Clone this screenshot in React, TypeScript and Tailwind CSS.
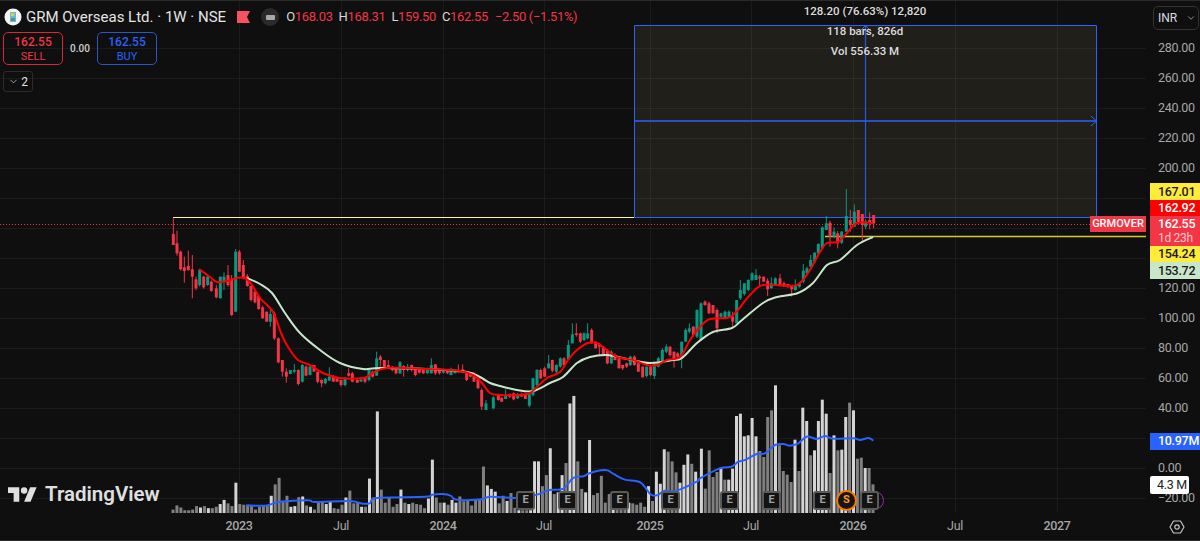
import { ChevronDown } from 'lucide-react';

// candle rows, read in crop units: [x, bodyTop, bodyBottom, up, wickTop, wickBottom]
type Row = [number, number, number, number, number?, number?];
type Candle = { x: number; top: number; bottom: number; up: boolean; hi: number; lo: number };

const early: Row[] = [
    [40, 72, 105, 0, 25, 105], [51, 100, 130, 0, 62, 137], [62, 125, 178, 0, 122, 182], [73, 172, 183, 0, 140, 218], [85, 168, 180, 0, 122, 182],
    [97, 178, 200, 0, 135, 265], [108, 208, 235, 0, 200, 240], [119, 180, 225, 1], [131, 200, 232, 0], [143, 200, 225, 1], [154, 215, 243, 0],
    [169, 235, 262, 0, 225, 265], [181, 200, 265, 1], [192, 200, 215, 1, 187, 240], [204, 195, 225, 0, 165, 230], [215, 210, 315, 0, 195, 318], [227, 125, 305, 1, 117, 305],
    [238, 125, 185, 0], [250, 165, 205, 0, 150, 208], [262, 198, 228, 0, 192, 230], [273, 228, 270, 0], [285, 245, 277, 0], [296, 258, 297, 0], [308, 292, 325, 0], [320, 305, 335, 0],
    [331, 312, 335, 1, 300, 350], [343, 310, 385, 0, 305, 390], [355, 385, 457, 0], [367, 450, 485, 0, 450, 500], [379, 485, 500, 0, 475, 518], [391, 480, 492, 1], [403, 480, 485, 1, 462, 490],
    [415, 480, 522, 0], [427, 465, 515, 1], [438, 470, 497, 0], [450, 470, 495, 1], [462, 465, 485, 0], [473, 485, 515, 0, 485, 520], [485, 510, 520, 0, 508, 532], [496, 507, 520, 1],
    [508, 500, 512, 1, 472, 512], [520, 500, 515, 0], [531, 505, 515, 0], [543, 510, 525, 0], [555, 503, 525, 1], [566, 490, 497, 0, 475, 500], [577, 490, 515, 0], [592, 510, 518, 0], [603, 508, 515, 1],
    [615, 505, 515, 0], [627, 480, 510, 1], [638, 485, 500, 0], [650, 445, 497, 1, 425, 497], [661, 440, 450, 0, 435, 470], [673, 450, 472, 0], [685, 465, 473, 0, 450, 475], [697, 470, 480, 0],
    [708, 475, 490, 0], [720, 457, 490, 1], [731, 468, 480, 0, 465, 500], [743, 470, 480, 1, 462, 485], [755, 465, 480, 0], [766, 477, 495, 0], [778, 480, 488, 0], [790, 480, 490, 0], [802, 478, 490, 1],
    [814, 465, 490, 1, 445, 490], [826, 463, 490, 0], [838, 480, 490, 0], [850, 482, 488, 1], [862, 482, 490, 0], [873, 478, 495, 1], [885, 480, 490, 1], [895, 480, 487, 0, 463, 488], [908, 478, 487, 0, 463, 488],
    [920, 487, 510, 0], [931, 490, 500, 0], [942, 492, 515, 0], [954, 505, 535, 0], [965, 540, 590, 0, 535, 600], [978, 580, 600, 1, 570, 600], [1000, 562, 595, 1], [1015, 555, 570, 0],
];

const middle: Row[] = [
    [5, 293, 305, 0], [17, 285, 297, 1, 268, 297], [29, 283, 290, 0], [41, 280, 298, 0], [53, 283, 295, 1], [64, 283, 290, 0], [76, 283, 297, 0], [88, 283, 317, 1], [99, 235, 285, 1], [111, 210, 255, 1],
    [122, 210, 235, 0], [134, 205, 230, 0], [146, 190, 205, 1, 165, 205], [157, 180, 212, 0], [169, 195, 215, 1], [181, 175, 200, 1], [192, 175, 195, 0], [205, 135, 178, 1, 120, 180], [217, 103, 130, 1, 70, 130],
    [229, 100, 105, 0, 70, 110], [241, 100, 125, 0], [252, 100, 120, 1], [263, 100, 115, 1, 70, 118], [275, 90, 130, 0], [287, 125, 145, 0], [298, 135, 140, 0, 130, 165], [310, 140, 165, 0], [322, 150, 190, 0],
    [334, 155, 190, 1], [345, 165, 180, 0], [357, 175, 205, 0], [368, 195, 205, 0], [380, 190, 200, 0], [391, 170, 195, 1], [403, 170, 195, 0], [415, 190, 215, 0], [428, 200, 232, 0], [440, 200, 228, 1],
    [452, 200, 225, 0], [463, 190, 228, 1, 190, 237], [475, 175, 200, 1], [487, 150, 185, 1], [499, 140, 155, 1, 133, 160], [510, 140, 165, 0], [522, 155, 180, 0, 155, 203], [533, 160, 170, 0], [545, 125, 175, 1, 125, 205],
    [557, 90, 125, 1], [568, 85, 95, 1, 70, 100], [580, 80, 105, 0], [591, 30, 110, 1], [603, 10, 120, 1], [615, 5, 15, 0], [627, 10, 40, 0], [639, 15, 40, 0], [651, 30, 85, 0, 25, 100], [663, 40, 50, 1],
    [675, 35, 55, 1], [687, 35, 50, 1], [698, 50, 65, 0, 35, 85], [710, 0, 70, 1],
];

const late: Row[] = [
    [121, 360, 385, 1, 330, 390], [133, 340, 372, 1], [145, 330, 360, 1], [156, 310, 330, 1], [168, 315, 330, 1, 297, 330], [179, 320, 325, 0, 315, 350], [191, 320, 335, 0], [203, 332, 358, 0, 325, 378],
    [214, 340, 355, 1, 322, 355], [226, 325, 345, 1], [240, 325, 348, 0, 312, 350], [252, 340, 350, 0], [264, 342, 352, 0], [275, 350, 358, 0, 348, 380], [286, 348, 360, 1, 328, 362], [298, 340, 350, 1],
    [310, 302, 335, 1, 282, 340], [321, 295, 310, 1], [332, 270, 290, 1, 255, 292], [344, 248, 275, 1], [355, 222, 250, 1], [367, 172, 235, 1], [379, 160, 180, 1, 138, 180], [390, 158, 200, 0, 152, 230],
    [402, 185, 200, 1, 172, 205], [413, 190, 220, 0, 183, 235], [425, 185, 218, 1], [439, 138, 185, 1, 57, 185], [451, 150, 165, 0, 120, 185], [463, 125, 170, 1, 103, 170], [475, 120, 160, 0], [487, 132, 165, 0, 132, 212],
    [497, 155, 170, 1, 148, 178], [509, 150, 158, 0, 127, 178], [521, 135, 160, 0, 135, 175],
];

const toCandles = (rows: Row[], ox: number, oy: number): Candle[] =>
    rows.map(([x, top, bottom, up, hi, lo], i) => ({
        x: ox + x / 3,
        top: oy + top / 3,
        bottom: oy + bottom / 3,
        up: up === 1,
        hi: oy + (hi ?? top - (i * 37) % 6) / 3,
        lo: oy + (lo ?? bottom + (i * 23) % 6) / 3,
    }));

const candles = [...toCandles(early, 160, 210), ...toCandles(middle, 500, 300), ...toCandles(late, 700, 170)];

const redLine: [number, number][] = [
    [199, 269], [210, 277], [217, 282], [227, 281], [237, 278], [245, 278], [252, 285], [260, 298], [273, 312], [281, 333], [288, 347], [298, 360], [310, 365], [323, 373], [340, 378], [363, 378], [373, 373],
    [387, 368], [427, 369], [460, 371], [473, 375], [482, 383], [490, 393], [500, 395], [520, 395], [530, 393], [537, 387], [547, 378], [560, 372], [568, 360], [577, 350], [588, 343], [597, 343], [607, 350],
    [617, 357], [633, 360], [647, 365], [657, 365], [667, 360], [680, 357], [690, 340], [700, 327], [710, 319], [727, 318], [733, 315], [738, 310], [750, 295], [763, 285], [790, 286], [800, 283], [810, 270],
    [820, 252], [827, 243], [838, 242], [847, 233], [857, 223], [873, 223],
];

const maLine: [number, number][] = [
    [247, 278], [260, 284], [272, 293], [285, 313], [300, 333], [320, 350], [340, 363], [363, 369], [380, 368], [427, 369], [467, 372], [480, 377], [490, 383], [500, 386], [517, 390], [533, 391], [550, 383],
    [563, 377], [577, 363], [590, 357], [607, 355], [627, 359], [650, 363], [673, 360], [682, 358], [697, 343], [713, 332], [732, 328], [742, 320], [763, 303], [777, 297], [798, 293], [813, 283], [827, 265],
    [840, 260], [857, 245], [873, 237],
];

const volumeMa: [number, number][] = [
    ...[[250, 315], [310, 315], [345, 305], [430, 300], [450, 305], [550, 302], [590, 310], [610, 308], [630, 293], [770, 290], [790, 284], [820, 282], [845, 287], [860, 298], [925, 298], [960, 290], [1030, 293],
        [1090, 285], [1130, 270], [1170, 267], [1200, 235], [1230, 230], [1245, 222], [1280, 213], [1300, 213], [1320, 225], [1350, 240], [1395, 248], [1425, 283], [1445, 285], [1465, 272], [1500, 272], [1560, 245]]
        .map(([x, y]): [number, number] => [160 + x / 2.904, 397 + y / 2.904]),
    ...[[0, 295], [60, 265], [95, 260], [115, 245], [135, 240], [170, 222], [195, 220], [225, 195], [250, 192], [270, 197], [295, 190], [320, 170], [350, 177], [375, 168], [400, 176], [460, 175], [480, 180], [505, 174], [520, 182]]
        .map(([x, y]): [number, number] => [700 + x / 3, 380 + y / 3]),
];

const volumeA = [
    10, 22, 16, 8, 8, 10, 20, 16, 20, 14, 14, 18, 26, 38, 28, 20, 88, 26, 24, 24, 20, 10, 18, 22, 22, 50, 83, 102, 36, 50, 18, 20, 46, 48, 22, 18, 10, 30, 32, 26, 32, 14, 12, 24, 45, 65, 28, 30, 18, 18, 100, 45, 295,
    68, 30, 45, 18, 26, 68, 30, 26, 30, 26, 24, 14, 42, 155, 45, 30, 30, 24, 38, 30, 48, 34, 38, 22, 38, 38, 135, 80, 70, 62, 28, 50, 35, 58, 15, 8, 8, 8, 8, 150, 150, 78, 110, 188, 55, 60, 110, 145, 318, 340, 150,
    70, 60, 212, 52, 58, 108, 30, 55, 62, 50, 45, 35, 30, 28, 24, 30, 18, 78, 35, 120, 85, 185, 178, 150, 118, 88, 140, 170, 143, 120,
];
const volumeB = [
    193, 73, 188, 108, 123, 136, 100, 100, 133, 291, 298, 230, 233, 285, 230, 186, 168, 288, 308, 383, 203, 126, 115, 93, 220, 126, 316, 276, 173, 188, 276, 340, 298, 120, 233, 188, 190, 288, 331, 308, 163, 166, 135, 135, 86,
];
const greyB = new Set([1, 2, 3, 4, 6, 15, 16, 17, 18, 20, 21, 22, 23, 25, 28, 33, 35, 38, 40, 41, 43, 44]);

const nearestUp = (x: number) =>
    candles.reduce((best, c) => (Math.abs(c.x - x) < Math.abs(best.x - x) ? c : best), candles[0]).up;

const bars = [
    ...volumeA.map((h, i) => {
        const x = 173 + i * 3.93;
        return { x, h: h / 2.904, light: nearestUp(x) };
    }),
    ...volumeB.map((h, i) => ({ x: 873 - (volumeB.length - 1 - i) * 3.9, h: h / 3, light: !greyB.has(i) })),
];

// catmull-rom through the read points
const smooth = (pts: [number, number][]) =>
    pts.reduce((d, [x, y], i) => {
        if (i === 0) return `M${x} ${y}`;
        const p0 = pts[Math.max(i - 2, 0)];
        const p1 = pts[i - 1];
        const p3 = pts[Math.min(i + 1, pts.length - 1)];
        const c1x = p1[0] + (x - p0[0]) / 6;
        const c1y = p1[1] + (y - p0[1]) / 6;
        const c2x = x - (p3[0] - p1[0]) / 6;
        const c2y = y - (p3[1] - p1[1]) / 6;
        return `${d} C${c1x} ${c1y} ${c2x} ${c2y} ${x} ${y}`;
    }, '');

const priceTicks = ['280.00', '260.00', '240.00', '220.00', '200.00', '', '', '', '120.00', '100.00', '80.00', '60.00', '40.00', '', '0.00', '\u221220.00'];
const gridY = [48, 78, 108, 138, 168, 198, 228, 258, 288, 318, 348, 378, 408, 438, 468, 498];
const gridX = [239, 341, 443, 544, 650, 751, 853, 955, 1057];

const FONT = "font-['Roboto','Liberation_Sans',sans-serif]";

function ChartDrawing() {
    return (
        <svg width="1146" height="513" viewBox="0 0 1146 513" className="block">
            <rect x="634.5" y="25.5" width="462" height="192" fill="#201f1a" />
            {gridY.map((y) => (
                <line key={y} x1="0" x2="1146" y1={y + 0.5} y2={y + 0.5} stroke="#ffffff" strokeOpacity="0.05" />
            ))}
            {gridX.map((x) => (
                <line key={x} x1={x + 0.5} x2={x + 0.5} y1="0" y2="513" stroke="#ffffff" strokeOpacity="0.05" />
            ))}

            {/* position tool */}
            <line x1="173" x2="634" y1="217.5" y2="217.5" stroke="#fff3a0" />
            <path d="M634.5 217.5V25.5H1096.5V217.5H634.5" fill="none" stroke="#2962ff" />
            <line x1="634.5" x2="1096" y1="121" y2="121" stroke="#2962ff" strokeWidth="1.5" />
            <path d="M1091 116L1096.5 121L1091 126" fill="none" stroke="#2962ff" />
            <line x1="865.5" x2="865.5" y1="25.5" y2="217" stroke="#2962ff" strokeOpacity="0.85" strokeWidth="1.25" />
            <path d="M860.5 30.5L865.5 25.5L870.5 30.5" fill="none" stroke="#2962ff" />
            <line x1="825" x2="1146" y1="236.5" y2="236.5" stroke="#d8c62a" strokeWidth="1.5" />
            <line x1="0" x2="1090" y1="224.5" y2="224.5" stroke="#f23645" strokeDasharray="1 2" />

            {/* volume */}
            {bars.map((b) => (
                <rect key={b.x} x={b.x - 1.5} y={513 - b.h} width="3" height={b.h} fill={b.light ? '#d4d4d4' : '#808080'} />
            ))}
            <path d={smooth(volumeMa)} fill="none" stroke="#2962ff" strokeWidth="2" />

            {/* candles */}
            {candles.map((c) => {
                const color = c.up ? '#089981' : '#f23645';
                return (
                    <g key={c.x}>
                        <line x1={c.x} x2={c.x} y1={c.hi} y2={c.lo} stroke={color} />
                        <rect x={c.x - 1.5} y={c.top} width="3" height={c.bottom - c.top} fill={color} />
                    </g>
                );
            })}
            <path d={smooth(maLine)} fill="none" stroke="#c8e6c9" strokeWidth="2" />
            <path d={smooth(redLine)} fill="none" stroke="#ff0000" strokeWidth="2" />
        </svg>
    );
}

function Legend() {
    return (
        <div className="absolute left-0 top-0 flex flex-col items-start pl-[3px] pt-[5px]">
            <div className="flex h-[24px] items-center">
                <svg width="18" height="18" viewBox="0 0 18 18" className="ml-[1px] mr-[4px]">
                    <circle cx="9" cy="9" r="8.5" fill="#f4f4f4" />
                    <rect x="6" y="4" width="6" height="10" fill="#6fb7d8" />
                    <rect x="7" y="5" width="3" height="3" fill="#e8c94a" />
                    <rect x="7" y="10" width="4" height="3" fill="#4d9a6a" />
                </svg>
                <span className="text-[15px] text-[#e4e4e4]">GRM Overseas Ltd. · 1W · NSE</span>
                <svg width="13" height="12" viewBox="0 0 13 12" className="ml-[11px]">
                    <path d="M0 0H13L10 6L13 12H0Z" fill="#f7525f" />
                </svg>
                <span className="ml-[11px] flex h-[18px] w-[18px] items-center justify-center rounded-full bg-[#2a2a2a]">
                    <span className="h-[5px] w-[9px] rounded-[1px] bg-[#a8a8a8]" />
                </span>
                <div className="ml-[7px] flex gap-[6px] text-[13px] tracking-[-0.35px] text-[#f23645]">
                    <span><span className="text-[#d8d8d8]">O</span>168.03</span>
                    <span><span className="text-[#d8d8d8]">H</span>168.31</span>
                    <span><span className="text-[#d8d8d8]">L</span>159.50</span>
                    <span><span className="text-[#d8d8d8]">C</span>162.55</span>
                    <span className="ml-[1px]">−2.50 (−1.51%)</span>
                </div>
            </div>
            <div className="mt-[3px] flex items-center">
                <div className="flex h-[33px] w-[60px] flex-col items-center justify-center rounded-[5px] border border-[#d62839] text-[#f23645]">
                    <span className="text-[12px] font-medium leading-[15px]">162.55</span>
                    <span className="text-[11px] leading-[13px]">SELL</span>
                </div>
                <span className="w-[34px] text-center text-[10px] font-medium text-[#d0d0d0]">0.00</span>
                <div className="flex h-[33px] w-[60px] flex-col items-center justify-center rounded-[5px] border border-[#2a56c6] text-[#2962ff]">
                    <span className="text-[12px] font-medium leading-[15px]">162.55</span>
                    <span className="text-[11px] leading-[13px]">BUY</span>
                </div>
            </div>
            <div className="mt-[6px] flex h-[21px] w-[30px] items-center justify-center gap-[2px] rounded-[3px] border border-[#2c2c2c] text-[12px] text-[#e0e0e0]">
                <ChevronDown size={11} strokeWidth={1.5} />
                2
            </div>
        </div>
    );
}

function Pin({ left, label }: { left: string; label: string }) {
    return (
        <div className={`absolute top-[491px] flex h-[19px] w-[19px] items-center justify-center rounded-[3px] border-2 border-[#5a5a5a] bg-[#131313] text-[11px] font-bold text-[#a0a0a0] ${left}`}>
            {label}
        </div>
    );
}

export default function App() {
    return (
        <div className={`flex h-[541px] w-[1200px] flex-col overflow-hidden border-y border-[#2a2a2a] bg-[#0f0f0f] ${FONT}`}>
            <div className="flex h-[512px]">
                <div className="relative -mt-px h-[513px] w-[1146px]">
                    <ChartDrawing />
                    <Legend />

                    <div className="absolute left-[765px] top-[4px] flex w-[200px] flex-col items-center gap-[6px] text-[11.5px] font-medium leading-[14px] text-[#dcdcdc]">
                        <span>128.20 (76.63%) 12,820</span>
                        <span>118 bars, 826d</span>
                        <span>Vol 556.33 M</span>
                    </div>

                    <div className="absolute left-[1090px] top-[216px] flex h-[16px] w-[56px] items-center justify-center bg-[#f23645] text-[11px] font-medium text-white">
                        GRMOVER
                    </div>

                    <div className="absolute left-[8px] top-[484px] flex items-center gap-[8px]">
                        <svg width="29" height="15" viewBox="0 4 36 18">
                            <path d="M14 22H7V11H0V4h14v18zM28 22h-8l7.5-18h8L28 22z" fill="#e0e0e0" />
                            <circle cx="20" cy="8" r="4" fill="#e0e0e0" />
                        </svg>
                        <span className="text-[20.5px] font-semibold leading-[20px] text-[#e0e0e0]">TradingView</span>
                    </div>

                    <Pin left="left-[516px]" label="E" />
                    <Pin left="left-[558px]" label="E" />
                    <Pin left="left-[610px]" label="E" />
                    <Pin left="left-[661px]" label="E" />
                    <Pin left="left-[720px]" label="E" />
                    <Pin left="left-[762px]" label="E" />
                    <Pin left="left-[813px]" label="E" />
                    <div className="absolute left-[836px] top-[490px] flex h-[21px] w-[21px] items-center justify-center rounded-full border-2 border-[#f57c00] bg-[#1a1512] text-[11px] font-bold text-[#f59a23]">
                        S
                    </div>
                    <Pin left="left-[860px]" label="E" />
                    <div className="absolute left-[879px] top-[491px] h-[19px] w-[5px] overflow-hidden">
                        <div className="ml-[-14px] h-[19px] w-[19px] rounded-full border border-[#9c27b0]" />
                    </div>
                </div>

                <div className="relative w-[54px]">
                    <div className="flex flex-col pl-[12px] pt-[32px] text-[12.5px] tracking-[-0.3px] text-[#a6a6a6]">
                        {priceTicks.map((t, i) => (
                            <div key={i} className="flex h-[30px] items-center">{t}</div>
                        ))}
                    </div>

                    <div className="absolute left-[7px] top-[5px] flex h-[24px] w-[46px] items-center justify-between rounded-[5px] border border-[#333333] bg-[#0f0f0f] pl-[4px] pr-[2px] text-[12px] text-[#d8d8e8]">
                        INR
                        <ChevronDown size={10} strokeWidth={1.5} />
                    </div>

                    <div className="absolute left-[4px] top-[182px] flex w-[50px] flex-col text-[12.5px] font-medium tracking-[-0.3px]">
                        <div className="h-[17px] bg-[#ffeb3b] pl-[8px] leading-[17px] text-[#1a1a1a]">167.01</div>
                        <div className="h-[16px] bg-[#ff0000] pl-[8px] leading-[16px] text-white">162.92</div>
                        <div className="flex h-[30px] flex-col bg-[#f23645] pl-[8px] text-white">
                            <span className="leading-[15px]">162.55</span>
                            <span className="text-[12px] font-normal leading-[14px] text-[#ffc8cc]">1d 23h</span>
                        </div>
                        <div className="h-[16px] bg-[#ffeb3b] pl-[8px] leading-[16px] text-[#1a1a1a]">154.24</div>
                        <div className="h-[17px] bg-[#c8e6c9] pl-[8px] leading-[17px] text-[#1a1a1a]">153.72</div>
                    </div>

                    <div className="absolute left-[4px] top-[432px] flex h-[17px] w-[50px] items-center whitespace-nowrap bg-[#2962ff] pl-[8px] text-[12.5px] font-medium tracking-[-0.3px] text-white">
                        10.97M
                    </div>
                    <div className="absolute left-[4px] top-[475px] flex h-[18px] w-[39px] items-center whitespace-nowrap rounded-[2px] bg-white pl-[7px] text-[12.5px] tracking-[-0.3px] text-[#222222]">
                        4.3 M
                    </div>
                </div>
            </div>

            <div className="flex flex-1 items-center text-[12.5px] tracking-[-0.3px] text-[#a6a6a6]">
                <div className="w-[188px]" />
                <div className="w-[102px] text-center font-medium">2023</div>
                <div className="w-[102px] text-center">Jul</div>
                <div className="w-[102px] text-center font-medium">2024</div>
                <div className="w-[100px] text-center">Jul</div>
                <div className="w-[112px] text-center font-medium">2025</div>
                <div className="w-[90px] text-center">Jul</div>
                <div className="w-[114px] text-center font-medium">2026</div>
                <div className="w-[90px] text-center">Jul</div>
                <div className="w-[114px] text-center font-medium">2027</div>
                <svg width="16" height="14" viewBox="0 0 16 14" className="ml-[55px]" fill="none" stroke="#c4c4c4" strokeWidth="1.2">
                    <path d="M4.5 1H11.5L15 7L11.5 13H4.5L1 7Z" strokeLinejoin="round" />
                    <circle cx="8" cy="7" r="2.2" />
                </svg>
            </div>
        </div>
    );
}
